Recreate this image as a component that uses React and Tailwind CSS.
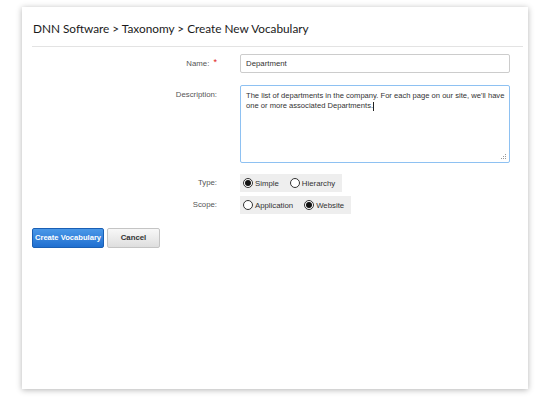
import React from 'react';

const Radio = ({ checked, label, className = '' }) => (
  <label className={`flex items-center ${className}`}>
    <span className="w-[10px] h-[10px] rounded-full border border-[#333] bg-white flex items-center justify-center">
      {checked && <span className="w-[6px] h-[6px] rounded-full bg-[#111]" />}
    </span>
    <span className="ml-[2px] text-[7.8px] text-[#333] leading-none mt-[2px]">{label}</span>
  </label>
);

const Label = ({ children, className = '' }) => (
  <div className={`w-[196px] shrink-0 text-right text-[7.8px] text-[#555] pr-[1px] ${className}`}>{children}</div>
);

const App = () => {
  return (
    <div className="w-[550px] h-[405px] bg-white pt-[7px] pl-[22px] font-['Liberation_Sans',Arial,sans-serif]">
      <div className="w-[506px] h-[382px] bg-white shadow-[0_1px_6px_rgba(0,0,0,0.3)] flex flex-col">
        {/* Header */}
        <h1 className="pl-[11px] pt-[14px] pb-[9px] text-[11.8px] leading-[16px] text-[#1a1a1a] font-['Lato',sans-serif]">
          DNN Software &gt; Taxonomy &gt; Create New Vocabulary
        </h1>
        <div className="ml-[10px] mr-[5px] h-px bg-[#e3e3e3]" />

        {/* Form */}
        <div className="mt-[7px] flex items-center">
          <Label>
            Name: <span className="text-[#e02020] align-top text-[9px] leading-none ml-[2px]">*</span>
          </Label>
          <div className="ml-[22px] w-[270px] h-[19px] border border-[#ccc] rounded-[2px] flex items-center px-[5px] text-[7.8px] text-[#333]">
            Department
          </div>
        </div>

        <div className="mt-[12px] flex items-start">
          <Label className="pt-[4px]">Description:</Label>
          <div className="ml-[22px] w-[270px] h-[78px] border border-[#8ec1f2] rounded-[2px] pl-[5px] pr-[2px] pt-[5px] text-[7.6px] leading-[10px] text-[#333] whitespace-nowrap relative">
            The list of departments in the company. For each page on our site, we'll have
            <br />
            one or more associated Departments.
            <span className="inline-block w-px h-[9px] bg-[#222] align-middle" />
            <svg className="absolute right-[2px] bottom-[2px]" width="6" height="6" viewBox="0 0 6 6">
              <g fill="#999">
                <rect x="4" y="0" width="1" height="1" />
                <rect x="2" y="2" width="1" height="1" />
                <rect x="4" y="2" width="1" height="1" />
                <rect x="0" y="4" width="1" height="1" />
                <rect x="2" y="4" width="1" height="1" />
                <rect x="4" y="4" width="1" height="1" />
              </g>
            </svg>
          </div>
        </div>

        <div className="mt-[11px] flex items-center">
          <Label>Type:</Label>
          <div className="ml-[22px] h-[18px] w-[102px] bg-[#eeeeee] flex items-center pl-[3px]">
            <Radio checked label="Simple" />
            <Radio label="Hierarchy" className="ml-[11px]" />
          </div>
        </div>

        <div className="mt-[4px] flex items-center">
          <Label>Scope:</Label>
          <div className="ml-[22px] h-[18px] w-[111px] bg-[#eeeeee] flex items-center pl-[3px]">
            <Radio label="Application" />
            <Radio checked label="Website" className="ml-[11px]" />
          </div>
        </div>

        <div className="mt-[14px] ml-[10px] flex gap-[3px]">
          <button className="h-[20px] w-[72px] rounded-[2px] border border-[#1a5fb4] bg-gradient-to-b from-[#4a98e8] to-[#1f6fd0] text-white text-[7.6px] font-bold">
            Create Vocabulary
          </button>
          <button className="h-[20px] w-[53px] rounded-[2px] border border-[#c4c4c4] bg-gradient-to-b from-[#f8f8f8] to-[#dedede] text-[#333] text-[7.8px] font-bold">
            Cancel
          </button>
        </div>
      </div>
    </div>
  );
};

export default App;
